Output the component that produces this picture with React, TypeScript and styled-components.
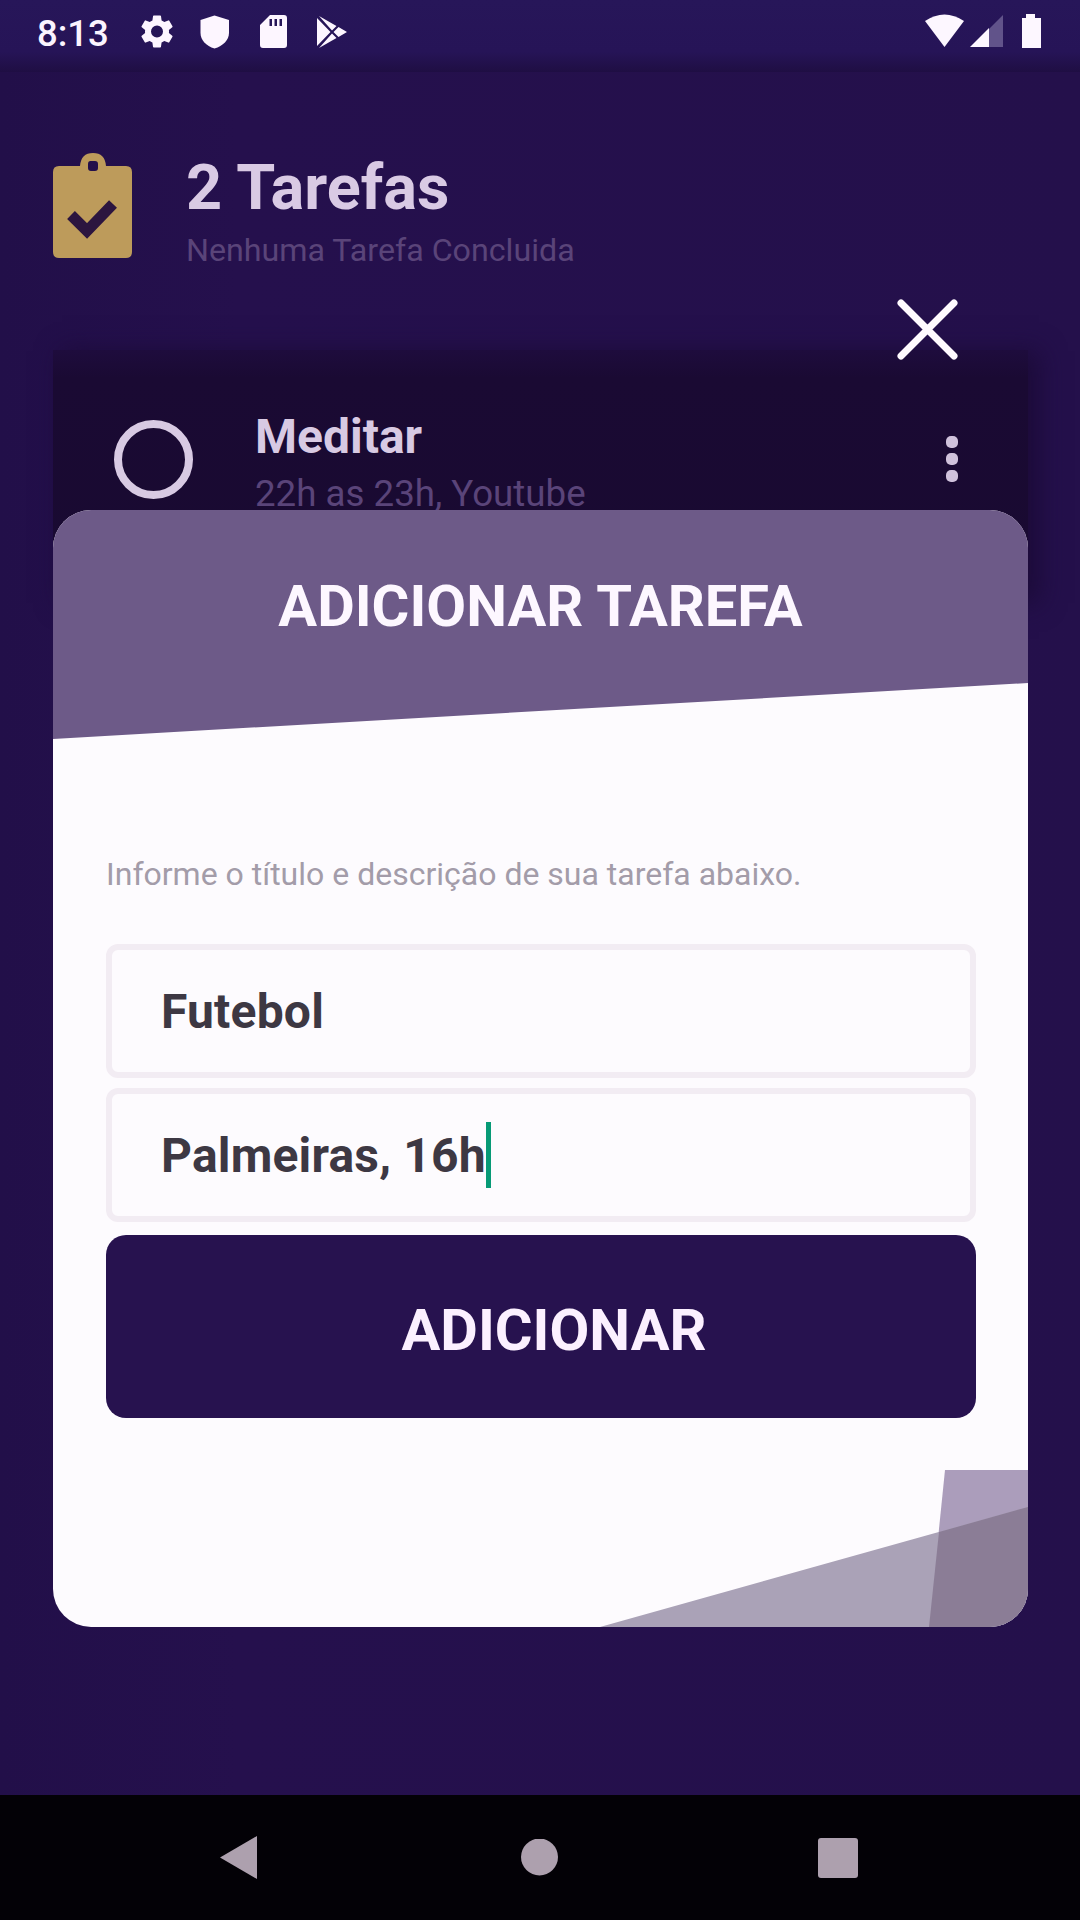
import React from "react";
import styled, { createGlobalStyle } from "styled-components";

const Global = createGlobalStyle`
  * { box-sizing: border-box; }
  body { margin: 0; background: #24104c; font-family: Roboto, "Noto Sans", sans-serif; }
`;

const Screen = styled.div`
  position: relative;
  width: 1080px;
  height: 1920px;
  display: flex;
  flex-direction: column;
  overflow: hidden;
  background: #24104b;
`;

const StatusBar = styled.header`
  height: 72px;
  padding: 0 39px 10px 37px;
  display: flex;
  align-items: center;
  background: linear-gradient(#271659 0, #261457 72%, #1f0e43 100%);
`;

const Clock = styled.span`
  width: 104px;
  padding-top: 5px;
  font-size: 36.5px;
  font-weight: 500;
  line-height: 42px;
  color: #fbf4ff;
`;

const StatusIcons = styled.div`
  display: flex;
  align-items: center;
  svg { display: block; }
`;

const StatusSpacer = styled.div`
  flex: 1;
`;

const Page = styled.main`
  flex: 1;
  padding: 78px 52px 0 53px;
  background: linear-gradient(90deg, #220f49, #25104d 22%, #24104b);
`;

const Summary = styled.section`
  height: 200px;
  display: flex;
  gap: 53px;
  svg { display: block; flex: none; }
`;

const SummaryText = styled.div`
  white-space: nowrap;
`;

const Title = styled.h1`
  margin: 1px 0 5px;
  font-size: 63px;
  line-height: 74px;
  font-weight: 700;
  color: #d9cae4;
`;

const Subtitle = styled.p<{ $size: number }>`
  margin: 0;
  font-size: ${(p) => p.$size}px;
  line-height: 40px;
  color: #5a4479;
  white-space: nowrap;
`;

const TaskCard = styled.article`
  height: 250px;
  padding: 70px 70px 0 61px;
  display: flex;
  align-items: flex-start;
  background: linear-gradient(#1e0c3d, #1a0a33 28px, #190a31);
  box-shadow: 10px 2px 24px 1px #1c0b39;
`;

const Radio = styled.div`
  width: 79px;
  height: 79px;
  border: 8px solid #d8cae3;
  border-radius: 50%;
`;

const TaskText = styled.div`
  flex: 1;
  padding: 0 0 0 62px;
  margin-top: -11px;
`;

const TaskName = styled.h2`
  margin: 0 0 9px;
  font-size: 48px;
  line-height: 56px;
  font-weight: 700;
  color: #d8cae3;
`;

const Dots = styled.div`
  margin-top: 16px;
  display: flex;
  flex-direction: column;
  gap: 5px;
`;

const Dot = styled.i`
  width: 12px;
  height: 12px;
  border-radius: 5px;
  background: #d0c2dc;
`;

const CloseButton = styled.button`
  position: absolute;
  left: 892px;
  top: 294px;
  padding: 0;
  border: 0;
  background: none;
  svg { display: block; }
`;

const Modal = styled.section`
  position: absolute;
  left: 53px;
  top: 510px;
  width: 975px;
  height: 1117px;
  border-radius: 38px;
  overflow: hidden;
  background: #fdfbfe;
  display: flex;
  flex-direction: column;
`;

const ModalHeader = styled.header`
  height: 229px;
  padding-top: 62px;
  text-align: center;
  background: #6d5a88;
  clip-path: polygon(0 0, 100% 0, 100% 173px, 0 100%);
`;

const ModalTitle = styled.h2`
  margin: 0;
  font-size: 57.800px;
  line-height: 68px;
  font-weight: 700;
  color: #fdf7ff;
`;

const Form = styled.form`
  padding: 104px 52px 0 53px;
  display: flex;
  flex-direction: column;
`;

const Hint = styled.p`
  margin: 11px 0 50px;
  height: 40px;
  font-size: 32px;
  line-height: 40px;
  color: #a39ca9;
  white-space: nowrap;
`;

const Field = styled.div`
  height: 134px;
  margin-bottom: 10px;
  padding: 0 49px;
  display: flex;
  align-items: center;
  border: 6px solid #f2ecf3;
  border-radius: 12px;
  font-size: 48px;
  font-weight: 700;
  letter-spacing: 0.2px;
  color: #3d3843;
`;

const Caret = styled.i`
  width: 5px;
  height: 66px;
  background: #079a76;
`;

const Submit = styled.button`
  height: 183px;
  margin-top: 3px;
  padding: 6px 0 0 26px;
  border: 0;
  border-radius: 20px;
  background: #27124f;
  font: 700 57.800px/68px Roboto, sans-serif;
  color: #fbf0ff;
`;

const Decoration = styled.svg`
  position: absolute;
  right: 0;
  bottom: 0;
`;

const NavBar = styled.nav`
  height: 125px;
  padding: 0 222px 0 220px;
  display: flex;
  align-items: center;
  justify-content: space-between;
  background: #030106;
  svg { display: block; }
`;

export default function App() {
  return (
    <Screen>
      <Global />
      <StatusBar>
        <Clock>8:13</Clock>
        <StatusIcons>
          <svg width="210" height="36" viewBox="141 13 210 36" fill="#fdf6ff">
            <g transform="translate(137 11.5) scale(1.667)">
              <path d="M19.14 12.94c.04-.3.06-.61.06-.94 0-.32-.02-.64-.07-.94l2.03-1.58a.49.49 0 0 0 .12-.61l-1.92-3.32a.49.49 0 0 0-.59-.22l-2.39.96c-.5-.38-1.03-.7-1.62-.94l-.36-2.54a.48.48 0 0 0-.48-.41h-3.84a.47.47 0 0 0-.47.41l-.36 2.54c-.59.24-1.13.57-1.62.94l-2.39-.96a.48.48 0 0 0-.59.22L2.74 8.87a.47.47 0 0 0 .12.61l2.03 1.58c-.05.3-.09.63-.09.94s.02.64.07.94l-2.03 1.58a.49.49 0 0 0-.12.61l1.92 3.32c.12.22.37.29.59.22l2.39-.96c.5.38 1.03.7 1.62.94l.36 2.54c.05.24.24.41.48.41h3.84c.24 0 .44-.17.47-.41l.36-2.54c.59-.24 1.13-.56 1.62-.94l2.39.96c.22.08.47 0 .59-.22l1.92-3.32a.47.47 0 0 0-.12-.61zM12 15.6A3.6 3.6 0 1 1 12 8.400a3.6 3.6 0 0 1 0 7.200z" />
            </g>
            <path d="M214.500 15.500L229 20V33C229 40 223 46 214.500 48.500C206 46 200.500 40 200.500 33V20Z" />
            <path fillRule="evenodd" d="M270 15H284Q287 15 287 18V45Q287 48 284 48H263Q260 48 260 45V25ZM269.500 19V26H272V19ZM274.500 19V26H277V19ZM279.500 19V26H282V19Z" />
            <path d="M317 18V46L330.500 32ZM319 16L332 30.500L336.500 26ZM319 48L332 33.500L336.500 38ZM333.500 32L338.500 27L347 32L338.500 37Z" />
          </svg>
        </StatusIcons>
        <StatusSpacer />
        <StatusIcons>
          <svg width="117" height="36" viewBox="924 13 117 36" fill="#fdf7ff">
            <path d="M925 21Q944.500 8 964 21L944.500 47Z" />
            <path d="M1003 15V47H971Z" fill="#61538a" />
            <path d="M989 28V47H970Z" />
            <path d="M1026 14H1035V18H1041V48H1022V18H1026Z" />
          </svg>
        </StatusIcons>
      </StatusBar>

      <Page>
        <Summary>
          <svg width="80" height="110" viewBox="53 150 80 110">
            <path fill="#bd9b5b" fillRule="evenodd" d="M59 166H80Q81 153 93 153Q105 153 106 166H126Q132 166 132 172V252Q132 258 126 258H59Q53 258 53 252V172Q53 166 59 166ZM90.500 161Q88 161 88 164V168Q88 171 91 171H95Q98 171 98 168V164Q98 161 95 161Z" />
            <path d="M71 215L87 231L113 204" fill="none" stroke="#2c153f" strokeWidth="11" />
          </svg>
          <SummaryText>
            <Title>2 Tarefas</Title>
            <Subtitle $size={32.2}>Nenhuma Tarefa Concluida</Subtitle>
          </SummaryText>
        </Summary>
        <TaskCard>
          <Radio />
          <TaskText>
            <TaskName>Meditar</TaskName>
            <Subtitle $size={36.7}>22h as 23h, Youtube</Subtitle>
          </TaskText>
          <Dots>
            <Dot />
            <Dot />
            <Dot />
          </Dots>
        </TaskCard>
      </Page>

      <NavBar>
        <svg width="37" height="43" viewBox="0 0 37 43"><path d="M0 21.500L37 0V43Z" fill="#ada0ae" /></svg>
        <svg width="41" height="37"><circle cx="22.500" cy="18" r="18.500" fill="#ada0ae" /></svg>
        <svg width="40" height="40"><rect width="40" height="40" rx="3" fill="#ada0ae" /></svg>
      </NavBar>

      <CloseButton aria-label="Fechar" type="button">
        <svg width="71" height="71" viewBox="0 0 71 71" fill="none" stroke="#fffaff" strokeWidth="7" strokeLinecap="round">
          <path d="M9 9L62 62M62 9L9 62" />
        </svg>
      </CloseButton>

      <Modal>
        <ModalHeader>
          <ModalTitle>ADICIONAR TAREFA</ModalTitle>
        </ModalHeader>
        <Form>
          <Hint>Informe o título e descrição de sua tarefa abaixo.</Hint>
          <Field>Futebol</Field>
          <Field>
            Palmeiras, 16h
            <Caret />
          </Field>
          <Submit type="button">ADICIONAR</Submit>
        </Form>
        <Decoration width="440" height="158" viewBox="588 1469 440 158">
          <path d="M945 1470H1028V1627H929Z" fill="#ab9dbb" />
          <path d="M600 1627L1028 1507V1627Z" fill="#aaa2b7" />
          <path d="M939 1532L1028 1507V1627H929Z" fill="#8b7d96" />
        </Decoration>
      </Modal>
    </Screen>
  );
}
